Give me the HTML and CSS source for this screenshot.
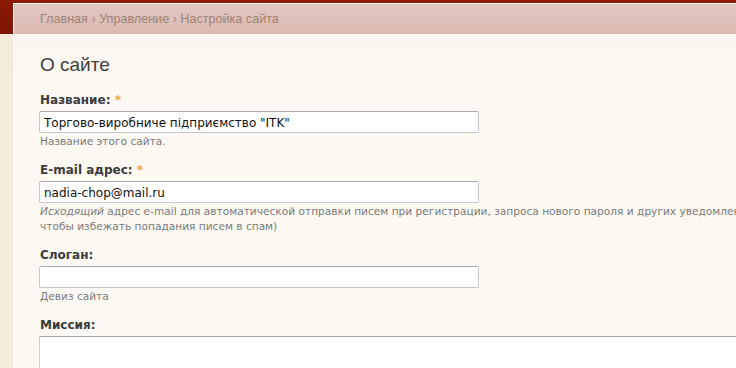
FILE: index.html
```html
<!DOCTYPE html>
<html lang="ru">
<head>
<meta charset="UTF-8">
<title>Настройка сайта</title>
<link rel="stylesheet" href="styles.css">
</head>
<body>
<div class="page">
    <div class="breadcrumb">
        <a href="#">Главная</a> › <a href="#">Управление</a> › <a href="#">Настройка сайта</a>
    </div>
    <div class="content">
        <h2>О сайте</h2>
        <div class="form-item">
            <label for="site-name">Название: <span class="required">*</span></label>
            <input type="text" id="site-name" class="form-text" value="Торгово-виробниче підприємство &quot;ITK&quot;">
            <div class="description">Название этого сайта.</div>
        </div>
        <div class="form-item">
            <label for="site-mail">E-mail адрес: <span class="required">*</span></label>
            <input type="text" id="site-mail" class="form-text" value="nadia-chop@mail.ru">
            <div class="description"><em>Исходящий</em> адрес e-mail для автоматической отправки писем при регистрации, запроса нового пароля и других уведомлений<br>чтобы избежать попадания писем в спам)</div>
        </div>
        <div class="form-item">
            <label for="site-slogan">Слоган:</label>
            <input type="text" id="site-slogan" class="form-text" value="">
            <div class="description">Девиз сайта</div>
        </div>
        <div class="form-item">
            <label for="site-mission">Миссия:</label>
            <textarea id="site-mission" class="form-textarea" rows="5"></textarea>
        </div>
    </div>
</div>
</body>
</html>
```

FILE: styles.css
```css
/* Site settings page */
body {
    margin: 0;
    padding: 0;
    font-family: "DejaVu Sans", Verdana, sans-serif;
    background: linear-gradient(to bottom, #8e1a04 0, #7a1502 34px, #f4ecdb 34px);
    overflow: hidden;
}
.page {
    margin: 3px 0 0 13px;
    border-top: 1px solid #fff;
    border-left: 1px solid #fff;
    background-color: #fcf9f2;
    min-height: 400px;
}
.breadcrumb {
    height: 30px;
    line-height: 30px;
    padding-left: 26px;
    font-family: "Liberation Sans", Arial, sans-serif;
    font-size: 12.6px;
    color: #a08a7a;
    background: linear-gradient(to bottom, #e0c6c2, #dcb9b2);
    white-space: nowrap;
}
.breadcrumb a {
    color: #9c8472;
    text-decoration: none;
}
.content {
    padding: 18px 0 0 26px;
    background: linear-gradient(to bottom, #fbf7ef, #fcf9f3 60px);
}
.content h2 {
    margin: 0 0 14px;
    font-family: "Liberation Sans", Arial, sans-serif;
    font-size: 19px;
    font-weight: normal;
    color: #3e3e3e;
    line-height: 26px;
}
.form-item {
    margin-bottom: 13px;
}
.form-item label {
    display: block;
    font-size: 12px;
    font-weight: bold;
    color: #3b3b3b;
    line-height: 16px;
    margin-bottom: 3px;
}
.required {
    color: #f7a21b;
}
.form-text {
    display: block;
    box-sizing: border-box;
    width: 440px;
    height: 22px;
    margin: 0 0 0 -1px;
    padding: 1px 4px 0;
    border: 1px solid #c8c8cc;
    border-top-color: #a8a8ae;
    border-radius: 2px;
    background-color: #fff;
    font-family: "DejaVu Sans", Verdana, sans-serif;
    font-size: 12px;
    color: #111;
}
.form-textarea {
    display: block;
    box-sizing: border-box;
    width: 760px;
    height: 80px;
    margin: 0 0 0 -1px;
    border: 1px solid #d2d2d6;
    border-top-color: #a8a8ae;
    background-color: #fff;
    resize: none;
}
.description {
    margin-top: 1px;
    font-size: 10.6px;
    line-height: 15px;
    color: #7a7a7a;
    white-space: nowrap;
}
```
